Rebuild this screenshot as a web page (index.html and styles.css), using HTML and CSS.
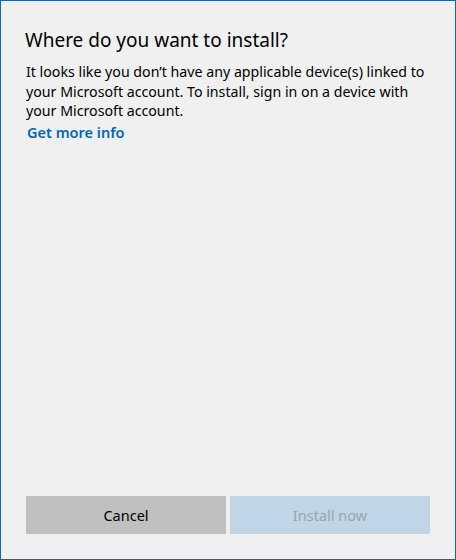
FILE: index.html
```html
<!DOCTYPE html>
<html lang="en">
<head>
    <meta charset="UTF-8">
    <title>Where do you want to install?</title>
    <link rel="stylesheet" href="styles.css">
</head>
<body>
    <div class="dialog">
        <div class="content">
            <h1 class="title">Where do you want to install?</h1>
            <p class="message">It looks like you don’t have any applicable device(s) linked to your Microsoft account. To install, sign in on a device with your Microsoft account.</p>
            <a class="more-link" href="#">Get more info</a>
        </div>

        <!-- Buttons -->
        <div class="actions">
            <button class="btn btn-cancel">Cancel</button>
            <button class="btn btn-install" disabled>Install now</button>
        </div>
    </div>
</body>
</html>
```

FILE: styles.css
```css
html, body {
    margin: 0;
    padding: 0;
}

body {
    font-family: "Noto Sans", "Open Sans", sans-serif;
    background: #f0f0f0;
}

.dialog {
    box-sizing: border-box;
    width: 456px;
    height: 560px;
    border: 1px solid #1565b4;
    background: #f0f0f0;
    display: flex;
    flex-direction: column;
    padding: 0 25px 25px 25px;
}

.content {
    flex: 1;
}

.title {
    margin: 25px 0 0 -1px;
    font-size: 19px;
    font-weight: normal;
    line-height: 28px;
    color: #000;
}

.message {
    margin: 8px 0 0 0;
    font-size: 14.2px;
    line-height: 19.5px;
    color: #000;
}

.more-link {
    display: inline-block;
    margin: -1px 0 0 1px;
    font-size: 14.5px;
    line-height: 18px;
    font-weight: 600;
    color: #0067b8;
    text-decoration: none;
}

.actions {
    display: flex;
    gap: 4px;
}

.btn {
    width: 200px;
    height: 38px;
    border: none;
    font-family: inherit;
    font-size: 14.5px;
    padding: 0;
}

.btn-cancel {
    background: #c0c0c0;
    color: #000;
}

.btn-install {
    background: #c0d6e6;
    color: #99a4ae;
}
```
